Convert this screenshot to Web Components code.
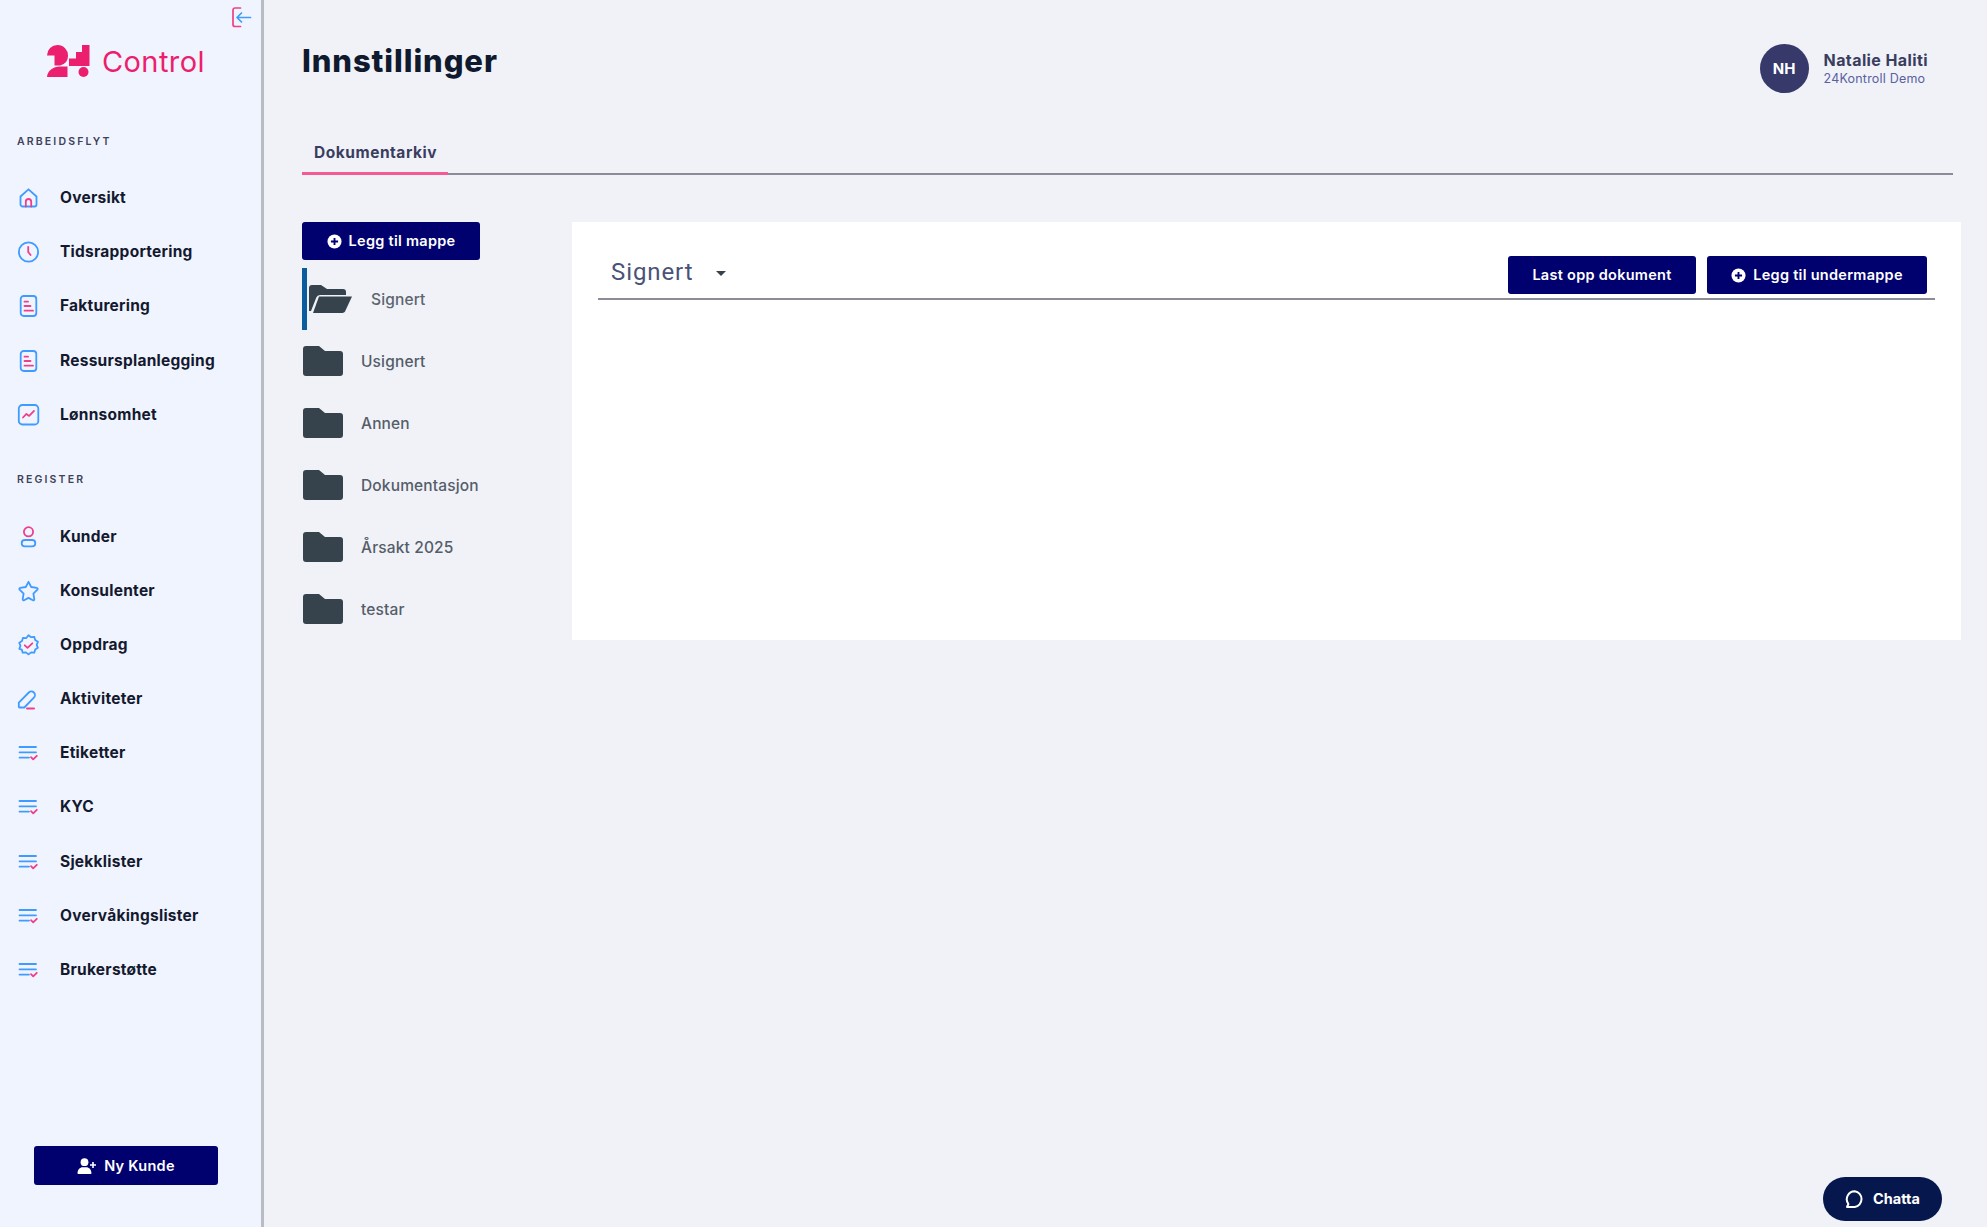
<!DOCTYPE html>
<html lang="no">
<head>
<meta charset="utf-8">
<title>Innstillinger</title>
<style>
html, body { margin: 0; height: 100%; }
body { font-family: "Inter", "Noto Sans", sans-serif; background: #f0f2f8; }
</style>
</head>
<body>
<app-shell>
  <app-sidebar slot="sidebar">
    <nav-heading>ARBEIDSFLYT</nav-heading>
    <nav-item icon="home">Oversikt</nav-item>
    <nav-item icon="clock">Tidsrapportering</nav-item>
    <nav-item icon="doc">Fakturering</nav-item>
    <nav-item icon="doc">Ressursplanlegging</nav-item>
    <nav-item icon="chart">Lønnsomhet</nav-item>
    <nav-heading class="second">REGISTER</nav-heading>
    <nav-item icon="user">Kunder</nav-item>
    <nav-item icon="star">Konsulenter</nav-item>
    <nav-item icon="badge">Oppdrag</nav-item>
    <nav-item icon="pen">Aktiviteter</nav-item>
    <nav-item icon="list">Etiketter</nav-item>
    <nav-item icon="list">KYC</nav-item>
    <nav-item icon="list">Sjekklister</nav-item>
    <nav-item icon="list">Overvåkingslister</nav-item>
    <nav-item icon="list">Brukerstøtte</nav-item>
  </app-sidebar>
  <page-header title-text="Innstillinger" initials="NH" name="Natalie Haliti" company="24Kontroll Demo"></page-header>
  <tab-bar>Dokumentarkiv</tab-bar>
  <archive-view>
    <folder-list slot="folders">
      <folder-item open>Signert</folder-item>
      <folder-item>Usignert</folder-item>
      <folder-item>Annen</folder-item>
      <folder-item>Dokumentasjon</folder-item>
      <folder-item>Årsakt 2025</folder-item>
      <folder-item>testar</folder-item>
    </folder-list>
    <doc-panel slot="panel" heading="Signert"></doc-panel>
  </archive-view>
  <chat-launcher>Chatta</chat-launcher>
</app-shell>

<script>
const ICONS = {
  home: `<path d="M2.500 9.500 10.500 2.300 18.500 9.500V17.500a2 2 0 0 1-2 2h-12a2 2 0 0 1-2-2Z" stroke="#3f9bff"/><path d="M7.800 19.500v-4.800a2.700 2.700 0 0 1 5.400 0v4.800" stroke="#ee3f88"/>`,
  clock: `<circle cx="10.500" cy="11" r="9.600" stroke="#3f9bff"/><path d="M10.200 5.800v5.200l2.400 3" stroke="#ee3f88"/>`,
  doc: `<rect x="2.700" y="1" width="15.600" height="20" rx="3" stroke="#3f9bff"/><path d="M6.500 6.700h3.500M6.500 11h6M6.500 15.700h8.500" stroke="#ee3f88"/>`,
  chart: `<rect x=".8" y="1" width="19.500" height="19.500" rx="3.500" stroke="#3f9bff"/><path d="M5 13.500l3.400-3.600 2.800 2 4.800-5" stroke="#ee3f88"/>`,
  user: `<circle cx="10.500" cy="5.800" r="4.600" stroke="#ee3f88"/><rect x="3.700" y="14" width="13.600" height="6.400" rx="3.200" stroke="#3f9bff"/>`,
  star: `<path d="M10.500 1.800l2.700 5.200 5.600.9c.9.100 1.200 1.100.6 1.700l-4 4 .9 5.600c.1.800-.7 1.400-1.400 1l-4.400-2.300-4.400 2.300c-.7.400-1.500-.2-1.400-1l.9-5.600-4-4c-.6-.6-.3-1.600.6-1.700l5.600-.9z" stroke="#3f9bff"/>`,
  badge: `<path d="M10.500 1.200l2.600 2 3.200-.3.900 3.100 2.700 1.800-1.200 3 1.200 3-2.700 1.800-.9 3.100-3.200-.3-2.600 2-2.600-2-3.200.3-.9-3.100L1.300 14.800l1.200-3-1.200-3L4 7l.9-3.100 3.200.3z" stroke="#3f9bff"/><path d="M6.800 11.300l2.700 2.600 4.800-4.600" stroke="#ee3f88"/>`,
  pen: `<path d="M.8 18.800V14.600L10.800 4.500a3.600 3.600 0 0 1 5.100 5.100L6.300 19.500H1.500a.7.700 0 0 1-.7-.7Z" stroke="#3f9bff"/><path d="M9 20.500h7" stroke="#ee3f88" stroke-width="2"/>`,
  list: `<path d="M1.500 5h16.500M1.500 10.300h16.500M1.500 15.600h9.500" stroke="#3f9bff"/><path d="M13 15.200l2.200 2.200 3.600-3.600" stroke="#ee3f88"/>`
};

const PLUS_CIRCLE = `<svg viewBox="0 0 16 16" width="15" height="15"><circle cx="8" cy="8" r="7.500" fill="#fff"/><path d="M8 4.200v7.600M4.200 8h7.600" stroke="#00006e" stroke-width="2"/></svg>`;
const USER_PLUS = `<svg viewBox="0 0 20 16" width="20" height="16" fill="#fff"><circle cx="7.500" cy="4.200" r="3.900"/><path d="M0.500 15.200c0-3.800 2.600-6 5-6h4c2.400 0 5 2.200 5 6 0 .5-.3.800-.8.800H1.300c-.5 0-.8-.3-.8-.8Z"/><path d="M16 4v6M13 7h6" stroke="#fff" stroke-width="1.600"/></svg>`;

class AppShell extends HTMLElement {
  constructor() {
    super();
    this.attachShadow({ mode: 'open' }).innerHTML = `
      <style>
        :host { display: grid; grid-template-columns: 264px 1fr; height: 100vh; min-height: 1227px; box-sizing: border-box; }
        .main { padding: 0 26px 0 38px; display: flex; flex-direction: column; min-width: 0; }
      </style>
      <slot name="sidebar"></slot>
      <div class="main"><slot></slot></div>`;
  }
}

class AppSidebar extends HTMLElement {
  constructor() {
    super();
    this.attachShadow({ mode: 'open' }).innerHTML = `
      <style>
        :host { display: flex; flex-direction: column; position: relative; box-sizing: border-box; height: 100%; background: #f0f4ff; border-right: 3px solid #b9bcc4; padding: 45px 0 42px; }
        .collapse { position: absolute; top: 7px; left: 232px; }
        .logo { display: flex; align-items: center; gap: 12px; padding-left: 47px; height: 32px; }
        .logo span { font: 400 29px/32px "Inter", sans-serif; letter-spacing: .4px; color: #ec1f6e; position: relative; top: 1px; }
        .nav { margin-top: 55px; display: flex; flex-direction: column; }
        .foot { margin-top: auto; padding-left: 34px; }
        ::slotted(.second) { margin-top: 28.500px; }
      </style>
      <svg class="collapse" width="20" height="21" viewBox="0 0 20 21" fill="none" stroke-width="1.700" stroke-linecap="round" stroke-linejoin="round">
        <path d="M8.500 1H3a2 2 0 0 0-2 2v14.500a2 2 0 0 0 2 2h5.500" stroke="#ee3f88"/>
        <path d="M18.500 10.500H5.500M9.500 6l-4.500 4.500 4.500 4.500" stroke="#3f9bff"/>
      </svg>
      <div class="logo">
        <svg width="43" height="32" viewBox="0 0 43 32" fill="#ec1f6e">
          <path d="M0 10.500A10.500 10.500 0 0 1 10.500 0 10.500 10.500 0 0 1 21 11Q21 18.500 13 20.500H7.500V10.500Z"/>
          <path d="M0 32A13 11 0 0 1 13 21.500H20.500V32Z"/>
          <path d="M22 13.500H29V7H35V0H42.500V21H22Z"/>
          <circle cx="36.500" cy="27" r="5"/>
        </svg>
        <span>Control</span>
      </div>
      <div class="nav"><slot></slot></div>
      <div class="foot"><action-button kind="user" wide>Ny Kunde</action-button></div>`;
  }
}

class NavHeading extends HTMLElement {
  constructor() {
    super();
    this.attachShadow({ mode: 'open' }).innerHTML = `
      <style>
        :host { display: block; padding-left: 17px; height: 20px; font: 600 10.500px/20px "Inter", sans-serif; letter-spacing: 2.150px; color: #3d4258; margin-bottom: 19px; }
      </style>
      <slot></slot>`;
  }
}

class NavItem extends HTMLElement {
  constructor() {
    super();
    const icon = ICONS[this.getAttribute('icon')] || '';
    this.attachShadow({ mode: 'open' }).innerHTML = `
      <style>
        :host { display: flex; align-items: center; height: 54.200px; padding-left: 18px; font: 700 15.500px/20px "Inter", sans-serif; letter-spacing: .25px; color: #14192e; }
        svg { width: 21px; height: 22px; flex: none; margin-right: 21px; overflow: visible; }
      </style>
      <svg viewBox="0 0 21 22" fill="none" stroke-width="1.800" stroke-linecap="round" stroke-linejoin="round">${icon}</svg>
      <slot></slot>`;
  }
}

class PageHeader extends HTMLElement {
  constructor() {
    super();
    this.attachShadow({ mode: 'open' }).innerHTML = `
      <style>
        :host { display: flex; align-items: flex-start; justify-content: space-between; height: 130px; padding-right: 33px; }
        h1 { margin: 41px 0 0; font: 800 31px/40px "Inter", sans-serif; letter-spacing: .9px; color: #101a2e; }
        .user { display: flex; align-items: center; gap: 15px; margin-top: 44px; }
        .avatar { width: 49px; height: 49px; border-radius: 50%; background: #36396a; color: #fff; display: flex; align-items: center; justify-content: center; font: 700 15px "Inter", sans-serif; }
        .name { font: 700 16px/20px "Inter", sans-serif; letter-spacing: .4px; color: #3a3d60; }
        .company { font: 400 12.500px/18px "Inter", sans-serif; letter-spacing: .2px; color: #5a60a0; }
      </style>
      <h1>${this.getAttribute('title-text')}</h1>
      <div class="user">
        <div class="avatar">${this.getAttribute('initials')}</div>
        <div>
          <div class="name">${this.getAttribute('name')}</div>
          <div class="company">${this.getAttribute('company')}</div>
        </div>
      </div>`;
  }
}

class TabBar extends HTMLElement {
  constructor() {
    super();
    this.attachShadow({ mode: 'open' }).innerHTML = `
      <style>
        :host { display: block; border-bottom: 2px solid #8a8c98; width: 1651px; box-sizing: border-box; height: 45px; margin-bottom: 47px; }
        .tab { display: inline-block; box-sizing: border-box; width: 146px; height: 45px; padding: 13px 0 0 12px; border-bottom: 3px solid #f45b95; font: 700 15.500px/20px "Inter", sans-serif; letter-spacing: .53px; color: #3a3d60; }
      </style>
      <div class="tab"><slot></slot></div>`;
  }
}

class ArchiveView extends HTMLElement {
  constructor() {
    super();
    this.attachShadow({ mode: 'open' }).innerHTML = `
      <style>
        :host { display: grid; grid-template-columns: 270px 1389px; align-items: start; }
      </style>
      <slot name="folders"></slot>
      <slot name="panel"></slot>`;
  }
}

class FolderList extends HTMLElement {
  constructor() {
    super();
    this.attachShadow({ mode: 'open' }).innerHTML = `
      <style>
        :host { display: flex; flex-direction: column; align-items: flex-start; }
        action-button { margin-bottom: 8px; width: 178px; padding: 0; }
      </style>
      <action-button kind="plus">Legg til mappe</action-button>
      <slot></slot>`;
  }
}

class FolderItem extends HTMLElement {
  constructor() {
    super();
    const open = this.hasAttribute('open');
    const icon = open
      ? `<svg width="45" height="30" viewBox="0 0 45 30"><path d="M1 27V4a3 3 0 0 1 3-3h9l6 4h16a3 3 0 0 1 3 3v3H12a4 4 0 0 0-3.700 2.500L3 27Z" fill="#36434d"/><path d="M11 12.500h33l-7 15a3 3 0 0 1-2.500 1.500H5Z" fill="#36434d"/></svg>`
      : `<svg width="40" height="30" viewBox="0 0 40 30"><path d="M0 3a3 3 0 0 1 3-3h13l6 5h15a3 3 0 0 1 3 3v19a3 3 0 0 1-3 3H3a3 3 0 0 1-3-3Z" fill="#36434d"/></svg>`;
    this.attachShadow({ mode: 'open' }).innerHTML = `
      <style>
        :host { display: flex; align-items: center; box-sizing: border-box; height: 62px; font: 500 15.500px/22px "Inter", sans-serif; letter-spacing: .15px; color: #5d6570; }
        :host([open]) { border-left: 5px solid #0a5c9c; padding-left: 1px; gap: 18px; }
        :host(:not([open])) { padding-left: 1px; gap: 18px; color: #555d68; }
        svg { flex: none; }
        slot { display: block; padding-top: 2px; }
      </style>
      ${icon}<slot></slot>`;
  }
}

class DocPanel extends HTMLElement {
  constructor() {
    super();
    this.attachShadow({ mode: 'open' }).innerHTML = `
      <style>
        :host { display: block; background: #fff; height: 418px; padding: 34px 26px 0; box-sizing: border-box; }
        .head { display: flex; align-items: center; height: 42px; border-bottom: 2px solid #8a8c98; }
        .title { font: 400 24px/30px "Roboto", sans-serif; letter-spacing: .9px; color: #4a5278; padding-left: 13px; margin-right: 23px; margin-top: -11px; }
        .caret { width: 0; height: 0; border: 5px solid transparent; border-top: 5px solid #36434d; border-bottom: 0; margin-top: -7px; }
        .actions { margin-left: auto; display: flex; gap: 11px; padding-right: 8px; margin-top: -4px; }
        .last { width: 188px; padding: 0; }
        .sub { width: 220px; padding: 0; }
      </style>
      <div class="head">
        <span class="title">${this.getAttribute('heading')}</span>
        <span class="caret"></span>
        <div class="actions">
          <action-button class="last">Last opp dokument</action-button>
          <action-button class="sub" kind="plus">Legg til undermappe</action-button>
        </div>
      </div>`;
  }
}

class ActionButton extends HTMLElement {
  constructor() {
    super();
    const kind = this.getAttribute('kind');
    const icon = kind === 'plus' ? PLUS_CIRCLE : kind === 'user' ? USER_PLUS : '';
    this.attachShadow({ mode: 'open' }).innerHTML = `
      <style>
        :host { display: inline-flex; align-items: center; justify-content: center; gap: 7px; box-sizing: border-box; height: 38px; padding: 0 24px; background: #00006e; color: #fff; border-radius: 3px; font: 600 14.500px/20px "Inter", sans-serif; letter-spacing: .28px; }
        :host([wide]) { width: 184px; height: 39px; }
      </style>
      ${icon}<slot></slot>`;
  }
}

class ChatLauncher extends HTMLElement {
  constructor() {
    super();
    this.attachShadow({ mode: 'open' }).innerHTML = `
      <style>
        :host { position: fixed; right: 45px; bottom: 6px; width: 119px; height: 44px; border-radius: 22px; background: #06174d; color: #fff; display: flex; align-items: center; justify-content: center; gap: 9px; font: 700 14.500px/20px "Inter", sans-serif; }
      </style>
      <svg width="19" height="19" viewBox="0 0 19 19" fill="none" stroke="#fff" stroke-width="2" stroke-linejoin="round"><path d="M9.800 1.200a8 8 0 0 1 0 15.800H2l1.400-3A8 8 0 0 1 9.800 1.200Z"/></svg>
      <slot></slot>`;
  }
}

customElements.define('app-shell', AppShell);
customElements.define('app-sidebar', AppSidebar);
customElements.define('nav-heading', NavHeading);
customElements.define('nav-item', NavItem);
customElements.define('page-header', PageHeader);
customElements.define('tab-bar', TabBar);
customElements.define('archive-view', ArchiveView);
customElements.define('folder-list', FolderList);
customElements.define('folder-item', FolderItem);
customElements.define('doc-panel', DocPanel);
customElements.define('action-button', ActionButton);
customElements.define('chat-launcher', ChatLauncher);
</script>
</body>
</html>
